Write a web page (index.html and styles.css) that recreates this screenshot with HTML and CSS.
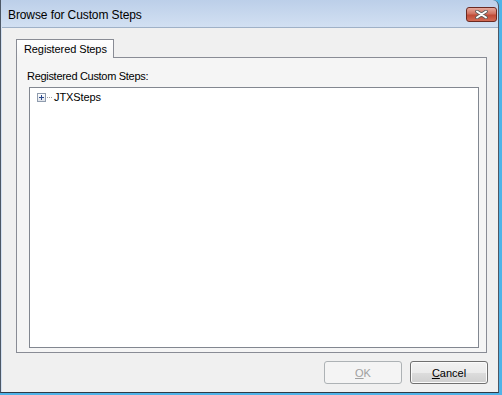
FILE: index.html
```html
<!DOCTYPE html>
<html>
    <head>
        <title>Browse for Custom Steps</title>
        <meta charset="UTF-8">
        <link rel="stylesheet" href="styles.css">
    </head>
    <body>
        <div id="window">

            <div id="titlebar">
                <span class="title">Browse for Custom Steps</span>
                <div class="close">
                    <svg width="15" height="9" viewBox="0 0 15 9">
                        <path d="M3 1.5 L12 7.5 M12 1.5 L3 7.5" stroke="#5a5a5a" stroke-width="3.6" stroke-linecap="round"/>
                        <path d="M3 1.5 L12 7.5 M12 1.5 L3 7.5" stroke="#ffffff" stroke-width="2" stroke-linecap="round"/>
                    </svg>
                </div>
            </div>

            <div id="client">
                <div class="tabs">
                    <div class="tab active">Registered Steps</div>
                </div>
                <div class="panel">
                    <div class="label">Registered Custom Steps:</div>
                    <div class="tree">
                        <div class="node">
                            <span class="expander">
                                <svg width="9" height="9" viewBox="0 0 9 9">
                                    <path d="M2 4.5 H7 M4.5 2 V7" stroke="#2c4a8c" stroke-width="1"/>
                                </svg>
                            </span>
                            <span class="dots"></span>
                            <span class="text">JTXSteps</span>
                        </div>
                    </div>
                </div>
                <div class="buttons">
                    <button class="btn" disabled><u>O</u>K</button>
                    <button class="btn"><u>C</u>ancel</button>
                </div>
            </div>

        </div>
    </body>
</html>
```

FILE: styles.css
```css
html, body {
    margin: 0;
    padding: 0;
}

body {
    width: 502px;
    height: 395px;
    background: #4fb3e8;
    font-family: "Liberation Sans", Arial, sans-serif;
    font-size: 11px;
    color: #000;
    overflow: hidden;
}

#window {
    width: 497px;
    height: 392px;
    border-left: 1px solid #4d5866;
    border-right: 1px solid #4d5866;
    border-bottom: 1px solid #2f3a46;
    border-top-right-radius: 6px;
    background: linear-gradient(#bccfe9, #d2e0f2 27px, #d2e0f2);
    display: flex;
    flex-direction: column;
}

#titlebar {
    height: 27px;
    display: flex;
    align-items: center;
    justify-content: space-between;
    padding: 0 1px 0 7px;
}

.title {
    font-size: 12px;
    color: #000;
    margin-top: 2px;
    letter-spacing: -0.1px;
}

.close {
    width: 29px;
    height: 13px;
    margin-top: 1px;
    border: 1px solid #6b2a22;
    border-radius: 3px;
    background: linear-gradient(#e6a99c, #d0705f 45%, #c04a36 55%, #d26b55);
    display: flex;
    align-items: center;
    justify-content: center;
}

#client {
    flex: 1;
    margin-left: 1px;
    border-top: 1px solid #9fb1c7;
    background: #f0f0f0;
    padding: 11px 11px 0 14px;
    display: flex;
    flex-direction: column;
}

.tabs {
    display: flex;
    position: relative;
    z-index: 1;
    margin-bottom: -1px;
}

.tab {
    height: 18px;
    padding: 0 6px 0 7px;
    border: 1px solid #898c95;
    border-bottom: none;
    background: linear-gradient(#ffffff, #f5f5f5);
    line-height: 19px;
    letter-spacing: -0.1px;
}

.panel {
    height: 283px;
    border: 1px solid #898c95;
    background: #f5f5f5;
    padding: 11px 7px 0 10px;
}

.label {
    height: 14px;
    line-height: 14px;
    margin-bottom: 4px;
    letter-spacing: -0.3px;
}

.tree {
    margin-left: 2px;
    height: 254px;
    border: 1px solid #828790;
    background: #ffffff;
    padding: 5px 0 0 7px;
}

.node {
    display: flex;
    align-items: center;
    height: 9px;
}

.expander {
    width: 7px;
    height: 7px;
    border: 1px solid #8f9cae;
    background: linear-gradient(#ffffff, #dfe3ea);
    position: relative;
}

.expander svg {
    position: absolute;
    left: -1px;
    top: -1px;
}

.dots {
    width: 5px;
    height: 1px;
    margin-left: 1px;
    background: repeating-linear-gradient(90deg, #a0a0a0 0, #a0a0a0 1px, transparent 1px, transparent 2px);
}

.text {
    margin-left: 2px;
    line-height: 13px;
    letter-spacing: -0.1px;
}

.buttons {
    display: flex;
    justify-content: flex-end;
    gap: 8px;
    margin-top: 8px;
    margin-right: -1px;
}

.btn {
    width: 78px;
    height: 23px;
    font-family: "Liberation Sans", Arial, sans-serif;
    font-size: 11px;
    color: #000;
    border: 1px solid #707070;
    border-radius: 3px;
    box-shadow: inset 0 0 0 1px #fbfbfb;
    background: linear-gradient(#f2f2f2, #ebebeb 50%, #dddddd 50%, #cfcfcf);
    padding: 0;
}

.btn:disabled {
    color: #a0a0a0;
    border-color: #adb2b5;
    background: #f4f4f4;
    box-shadow: none;
}
```
